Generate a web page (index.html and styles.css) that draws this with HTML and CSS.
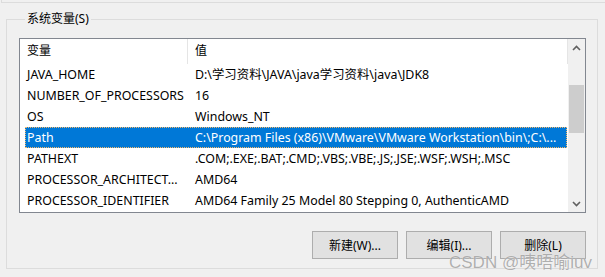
FILE: index.html
```html
<!DOCTYPE html>
<html lang="zh-CN">
<head>
<meta charset="utf-8">
<link rel="stylesheet" href="styles.css">
</head>
<body>
<div class="topstrip"></div>
<fieldset class="group">
  <legend class="group-label">系统变量(S)</legend>
  <div class="listview">
    <div class="lv-main">
      <div class="lv-header">
        <div class="hcell hcell-name">变量</div>
        <div class="hcell hcell-value">值</div>
      </div>
      <div class="row"><div class="c1">JAVA_HOME</div><div class="c2">D:\学习资料\JAVA\java学习资料\java\JDK8</div></div>
      <div class="row"><div class="c1">NUMBER_OF_PROCESSORS</div><div class="c2">16</div></div>
      <div class="row"><div class="c1">OS</div><div class="c2">Windows_NT</div></div>
      <div class="row row-selected"><div class="c1">Path</div><div class="c2">C:\Program Files (x86)\VMware\VMware Workstation\bin\;C:\...</div></div>
      <div class="row"><div class="c1">PATHEXT</div><div class="c2">.COM;.EXE;.BAT;.CMD;.VBS;.VBE;.JS;.JSE;.WSF;.WSH;.MSC</div></div>
      <div class="row"><div class="c1">PROCESSOR_ARCHITECT...</div><div class="c2">AMD64</div></div>
      <div class="row"><div class="c1">PROCESSOR_IDENTIFIER</div><div class="c2">AMD64 Family 25 Model 80 Stepping 0, AuthenticAMD</div></div>
    </div>
    <div class="scrollbar">
      <div class="sb-btn"><svg width="9" height="6" viewBox="0 0 9 6"><path d="M1 5 L4.5 1.5 L8 5" fill="none" stroke="#606060" stroke-width="1.6"/></svg></div>
      <div class="sb-track"><div class="sb-thumb"></div></div>
      <div class="sb-btn"><svg width="9" height="6" viewBox="0 0 9 6"><path d="M1 1 L4.5 4.5 L8 1" fill="none" stroke="#606060" stroke-width="1.6"/></svg></div>
    </div>
  </div>
  <div class="buttons">
    <button class="btn">新建(W)...</button>
    <button class="btn">编辑(I)...</button>
    <button class="btn">删除(L)</button>
  </div>
</fieldset>
<div class="watermark">CSDN @咦唔喻iuv</div>
</body>
</html>
```

FILE: styles.css
```css
html, body {
  margin: 0;
  padding: 0;
}
body {
  width: 605px;
  height: 277px;
  overflow: hidden;
  background: #f0f0f0;
  font-family: "Noto Sans", "Noto Sans CJK SC", sans-serif;
  font-size: 12px;
  color: #000;
  position: relative;
}
.topstrip {
  height: 2px;
  margin-left: 1px;
  border-left: 1px solid #dcdcdc;
  border-bottom: 1px solid #dcdcdc;
}
.group {
  margin: 8px 7px 0 6px;
  padding: 0 11px 0 12px;
  border: 1px solid #dcdcdc;
  height: 256px;
  box-sizing: content-box;
}
.group-label {
  margin-left: 6px;
  padding: 0 2px;
  line-height: 16px;
  font-size: 12px;
}
.listview {
  margin-top: 11px;
  height: 173px;
  border: 1px solid #828790;
  background: #fff;
  display: flex;
}
.lv-main {
  flex: 1;
  min-width: 0;
  display: flex;
  flex-direction: column;
  font-size: 12.4px;
}
.lv-header {
  height: 25px;
  display: flex;
  flex-shrink: 0;
  font-size: 12px;
}
.hcell {
  line-height: 24px;
  padding-left: 7px;
  box-sizing: border-box;
}
.hcell-name {
  width: 168px;
  border-right: 1px solid #e5e5e5;
}
.hcell-value {
  flex: 1;
  border-right: 1px solid #e5e5e5;
}
.row {
  height: 21px;
  line-height: 21px;
  margin: 0 1px 0 5px;
  display: grid;
  grid-template-columns: 163px 1fr;
  flex-shrink: 0;
}
.c1, .c2 {
  white-space: nowrap;
  overflow: hidden;
}
.c1 {
  padding: 0 4px 0 2px;
}
.c2 {
  padding: 0 2px 0 7px;
}
.row-selected {
  background: #0078d7;
  color: #fff;
  outline: 1px dotted #f5b86a;
  outline-offset: -1px;
}
.scrollbar {
  width: 17px;
  background: #f0f0f0;
  display: flex;
  flex-direction: column;
}
.sb-btn {
  height: 17px;
  display: flex;
  align-items: center;
  justify-content: center;
  flex-shrink: 0;
}
.sb-track {
  flex: 1;
  padding-top: 29px;
}
.sb-thumb {
  width: 15px;
  height: 48px;
  margin-left: 1px;
  background: #cdcdcd;
}
.buttons {
  margin-top: 18px;
  display: flex;
  justify-content: flex-end;
  gap: 8px;
}
.btn {
  width: 86px;
  height: 28px;
  border: 1px solid #adadad;
  background: #e1e1e1;
  font-family: "Noto Sans", "Noto Sans CJK SC", sans-serif;
  font-size: 12px;
  color: #000;
  padding: 0;
}
.watermark {
  position: absolute;
  left: 449px;
  top: 248px;
  font-family: "Liberation Sans", "Noto Sans CJK SC", sans-serif;
  font-size: 17px;
  color: rgba(150, 150, 150, 0.75);
  text-shadow: 0 0 1px rgba(255, 255, 255, 0.8);
}
```
